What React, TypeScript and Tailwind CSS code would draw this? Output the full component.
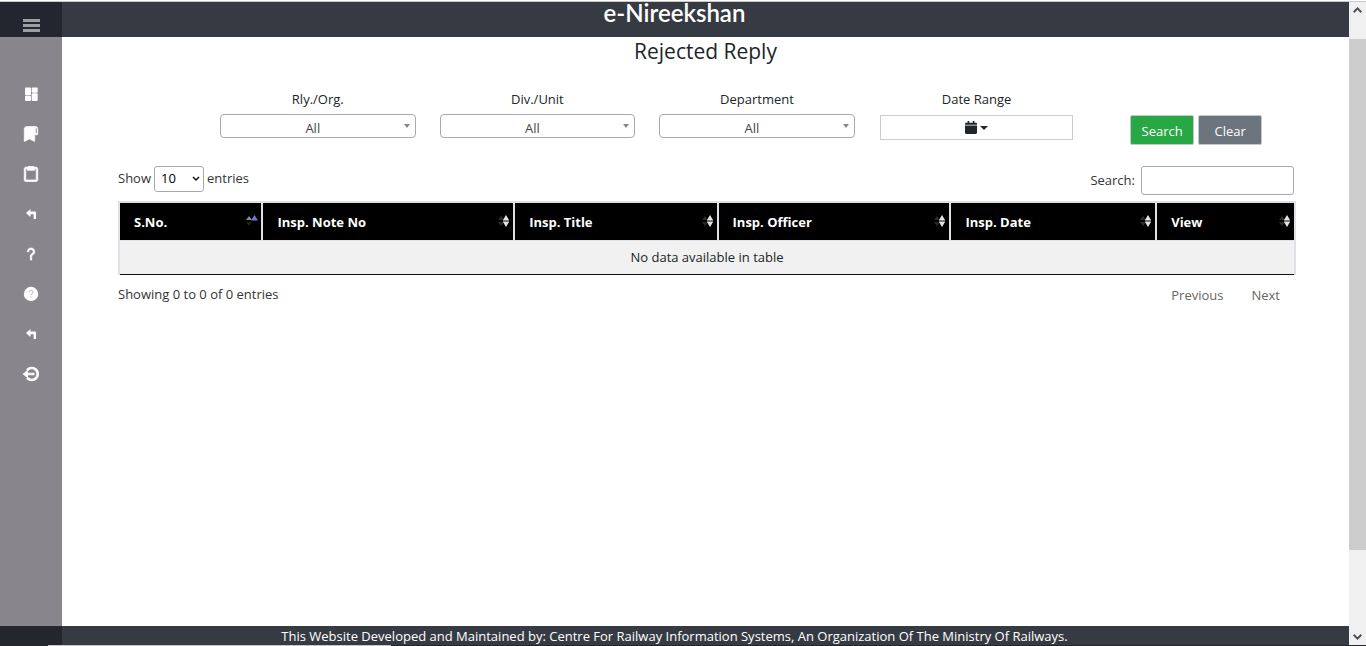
import React from "react";
import { BiClipboard, BiQuestionMark, BiLogOutCircle } from "react-icons/bi";

function DashboardIcon() {
  return (
    <svg viewBox="0 0 18 18" className="size-[18px]" fill="currentColor" aria-hidden="true">
      <rect x="3" y="2.500" width="6" height="7.700" rx="1" />
      <rect x="3" y="10.800" width="6" height="5.200" rx="1" />
      <rect x="9.700" y="2.500" width="6" height="5.200" rx="1" />
      <rect x="9.700" y="8.300" width="6" height="7.700" rx="1" />
    </svg>
  );
}

function BookmarkIcon() {
  return (
    <svg viewBox="0 0 24 24" className="size-[18px]" fill="currentColor" stroke="currentColor" strokeWidth="0.800" aria-hidden="true">
      <path d="M18.5 2h-12C4.57 2 3 3.57 3 5.5V22l7-3.5 7 3.5v-9h4V5.500C21 3.570 20.430 2 18.500 2zm1.500 9h-2V5.500c0-.827.373-1.500 1-1.500s1 .673 1 1.500V11z" />
    </svg>
  );
}

function TurnIcon() {
  return (
    <svg viewBox="0 0 18 18" className="size-[18px]" fill="currentColor" aria-hidden="true">
      <path d="M4 8 8.500 4v2.500h4.300c.7 0 1.200.5 1.200 1.200V14h-2.300V9.300H8.500V12z" />
    </svg>
  );
}

function HelpIcon() {
  return (
    <svg viewBox="0 0 18 18" className="size-[18px]" aria-hidden="true">
      <circle cx="9" cy="9" r="7.200" fill="currentColor" />
      <path d="M7 7.300c0-1.200.9-2 2.100-2s2 .8 2 1.800c0 1.500-2 1.600-2 3.200M9.100 11.600v1.200" fill="none" stroke="#b4b3b8" strokeWidth="1" />
    </svg>
  );
}

const links = [
  { label: "Dashboard", icon: <DashboardIcon /> },
  { label: "Bookmarks", icon: <BookmarkIcon /> },
  { label: "Notes", icon: <BiClipboard size={18} stroke="currentColor" strokeWidth={1} /> },
  { label: "Replies", icon: <TurnIcon /> },
  { label: "Questions", icon: <BiQuestionMark size={18} stroke="currentColor" strokeWidth={1} /> },
  { label: "Help", icon: <HelpIcon /> },
  { label: "Back", icon: <TurnIcon /> },
  { label: "Log out", icon: <BiLogOutCircle size={18} stroke="currentColor" strokeWidth={1.5} /> },
];

const columns = [
  { label: "S.No.", width: "w-[12.2%]" },
  { label: "Insp. Note No", width: "w-[21.4%]" },
  { label: "Insp. Title", width: "w-[17.3%]" },
  { label: "Insp. Officer", width: "w-[19.8%]" },
  { label: "Insp. Date", width: "w-[17.5%]" },
  { label: "View", width: "w-[11.8%]" },
];

function SortIcon({ active }: { active: boolean }) {
  return active ? (
    <svg viewBox="0 0 12 14" className="h-[14px] w-[12px] shrink-0" aria-hidden="true">
      <path d="M0 5 3 1l3 4z" fill="#8a8a8a" />
      <path d="M0 7h6l-3 4z" fill="#222" />
      <path d="M5 5.500 8.500 0 12 5.500z" fill="#7573d1" />
    </svg>
  ) : (
    <svg viewBox="0 0 12 14" className="h-[14px] w-[12px] shrink-0" aria-hidden="true">
      <path d="M0 5 3 1l3 4zM0 7h6l-3 4z" fill="#2b2b2b" />
      <path d="M5 5 8 0l3 5zM5 7h6l-3 5z" fill="#e4e4e4" />
      <path d="M5 5h6v2H5z" fill="#777" />
    </svg>
  );
}

function Filter({ id, label }: { id: string; label: string }) {
  return (
    <div className="px-3">
      <label htmlFor={id} className="mb-[5px] block text-center leading-5">
        {label}
      </label>
      <div className="relative">
        <select
          id={id}
          className="block h-6 w-full appearance-none rounded border border-[#aaa] bg-white pt-[3px] pr-[18px] pl-2 text-center leading-[18px] text-[#444] [text-align-last:center]"
        >
          <option>All</option>
        </select>
        <span className="pointer-events-none absolute top-[10px] right-[6px] border-x-[3px] border-t-4 border-x-transparent border-t-[#888]" />
      </div>
    </div>
  );
}

export default function App() {
  return (
    <div className="flex h-screen flex-col bg-white font-['Open_Sans','Noto_Sans',sans-serif] text-[13px] text-[#212529]">
      <div className="h-[2px] shrink-0 border-b border-[#c8c9cb]" />
      <div className="flex min-h-0 grow">
        <div className="flex min-w-0 grow flex-col">
          <header className="flex h-[35px] shrink-0 bg-[#363b43]">
            <div className="flex w-[62px] justify-center bg-[#23262f] pt-[17px]">
              <button aria-label="Toggle menu" className="flex h-[13px] w-[17px] flex-col justify-between">
                <span className="h-[3px] w-full bg-[#9c9ea2]" />
                <span className="h-[3px] w-full bg-[#9c9ea2]" />
                <span className="h-[3px] w-full bg-[#9c9ea2]" />
              </button>
            </div>
            <div className="grow pr-[62px] text-center font-['Lato',sans-serif] text-2xl leading-[22px] font-semibold text-white">
              e-Nireekshan
            </div>
          </header>

          <div className="flex min-h-0 grow">
            <nav className="flex w-[62px] shrink-0 flex-col items-center bg-[#88868c] pt-[37px] text-white">
              {links.map((link) => (
                <a key={link.label} href="#" aria-label={link.label} className="flex h-10 items-center">
                  {link.icon}
                </a>
              ))}
            </nav>

            <main className="min-w-0 grow">
              <h1 className="text-center text-[21px] leading-7">Rejected Reply</h1>

              <form className="mt-6 grid grid-cols-5 pr-[43px] pl-[146px]" onSubmit={(e) => e.preventDefault()}>
                <Filter id="rly" label="Rly./Org." />
                <Filter id="div" label="Div./Unit" />
                <Filter id="dept" label="Department" />
                <div className="px-[13px]">
                  <label htmlFor="range" className="mb-[6px] block text-center leading-5">
                    Date Range
                  </label>
                  <button id="range" type="button" className="flex h-[25px] w-full items-center justify-center gap-[3px] border border-[#ccc]">
                    <svg viewBox="0 0 448 512" className="h-[13px] w-[12px]" preserveAspectRatio="none" fill="currentColor" aria-hidden="true">
                      <path d="M0 180h448v284c0 26.500-21.500 48-48 48H48c-26.500 0-48-21.500-48-48zm448-32v-36c0-26.500-21.500-48-48-48h-48V12c0-6.600-5.400-12-12-12h-40c-6.600 0-12 5.400-12 12v52H160V12c0-6.600-5.400-12-12-12h-40c-6.600 0-12 5.400-12 12v52H48C21.500 64 0 85.500 0 112v36z" />
                    </svg>
                    <span className="border-x-4 border-t-4 border-x-transparent border-t-[#212529]" />
                  </button>
                </div>
                <div className="flex items-start justify-center gap-1 pt-[26px] text-white">
                  <button className="h-[30px] w-16 rounded-xs border border-[#c3c8cc] bg-[#28a745] pt-1">Search</button>
                  <button type="button" className="h-[30px] w-16 rounded-xs border border-[#c3c8cc] bg-[#6c757d] pt-1">
                    Clear
                  </button>
                </div>
              </form>

              <section className="mt-[21px] pr-[53px] pl-14">
                <div className="flex items-start justify-between text-[#333]">
                  <label className="flex items-center gap-[3px]">
                    Show
                    <span className="relative flex">
                      <select className="h-[26px] w-[50px] appearance-none rounded-[3px] border border-[#aaa] bg-white pl-[6px] text-black">
                        <option>10</option>
                        <option>25</option>
                      </select>
                      <svg viewBox="0 0 8 6" className="pointer-events-none absolute top-[10px] right-1 h-[6px] w-2" fill="none" stroke="#111" strokeWidth="1.500" aria-hidden="true">
                        <path d="M1 1l3 3 3-3" />
                      </svg>
                    </span>
                    entries
                  </label>
                  <label className="flex items-center gap-[6px] pr-[2px]">
                    Search:
                    <input className="h-[29px] w-[153px] rounded-[3px] border border-[#aaa] px-1" />
                  </label>
                </div>

                <table className="mt-[6px] w-full table-fixed border-collapse border-b border-[#111]">
                  <thead>
                    <tr>
                      {columns.map((column, i) => (
                        <th key={column.label} className={`${column.width} h-[38px] border-2 border-b border-[#dee2e6] bg-black pt-[2px] pr-[3px] pl-[14px] text-left font-bold text-white`}>
                          <div className="flex items-center justify-between">
                            {column.label}
                            <SortIcon active={i === 0} />
                          </div>
                        </th>
                      ))}
                    </tr>
                  </thead>
                  <tbody>
                    <tr>
                      <td colSpan={6} className="h-[34px] border-x-2 border-x-[#dee2e6] bg-[#f1f1f1] pt-[2px] text-center">
                        No data available in table
                      </td>
                    </tr>
                  </tbody>
                </table>

                <div className="flex justify-between pt-[9px] leading-5 text-[#333]">
                  <p>Showing 0 to 0 of 0 entries</p>
                  <div className="flex gap-7 pt-px pr-4 text-[#666]">
                    <button>Previous</button>
                    <button>Next</button>
                  </div>
                </div>
              </section>
            </main>
          </div>

          <footer className="flex h-[19px] shrink-0 bg-[#363b43]">
            <div className="w-[62px] bg-[#23262f]" />
            <p className="grow pr-[62px] text-center leading-5 text-white">
              This Website Developed and Maintained by: Centre For Railway Information Systems, An Organization Of The Ministry Of Railways.
            </p>
          </footer>
        </div>

        <div className="flex w-[17px] shrink-0 flex-col items-center bg-[#f0f0f0] py-[5px] text-[#505050]" aria-hidden="true">
          <svg viewBox="0 0 9 6" className="h-[6px] w-[9px]" fill="none" stroke="currentColor" strokeWidth="2">
            <path d="M.7 5.200 4.500 1.400l3.800 3.800" />
          </svg>
          <div className="mt-[26px] mb-[84px] w-full grow bg-[#cdcdcd]" />
          <svg viewBox="0 0 9 6" className="h-[6px] w-[9px]" fill="none" stroke="currentColor" strokeWidth="2">
            <path d="M.7.800l3.800 3.800L8.300.800" />
          </svg>
        </div>
      </div>
      <div className="h-px shrink-0 bg-[#20292c] pl-12">
        <div className="h-px w-[26%] bg-[#c8c6c8]" />
      </div>
    </div>
  );
}
